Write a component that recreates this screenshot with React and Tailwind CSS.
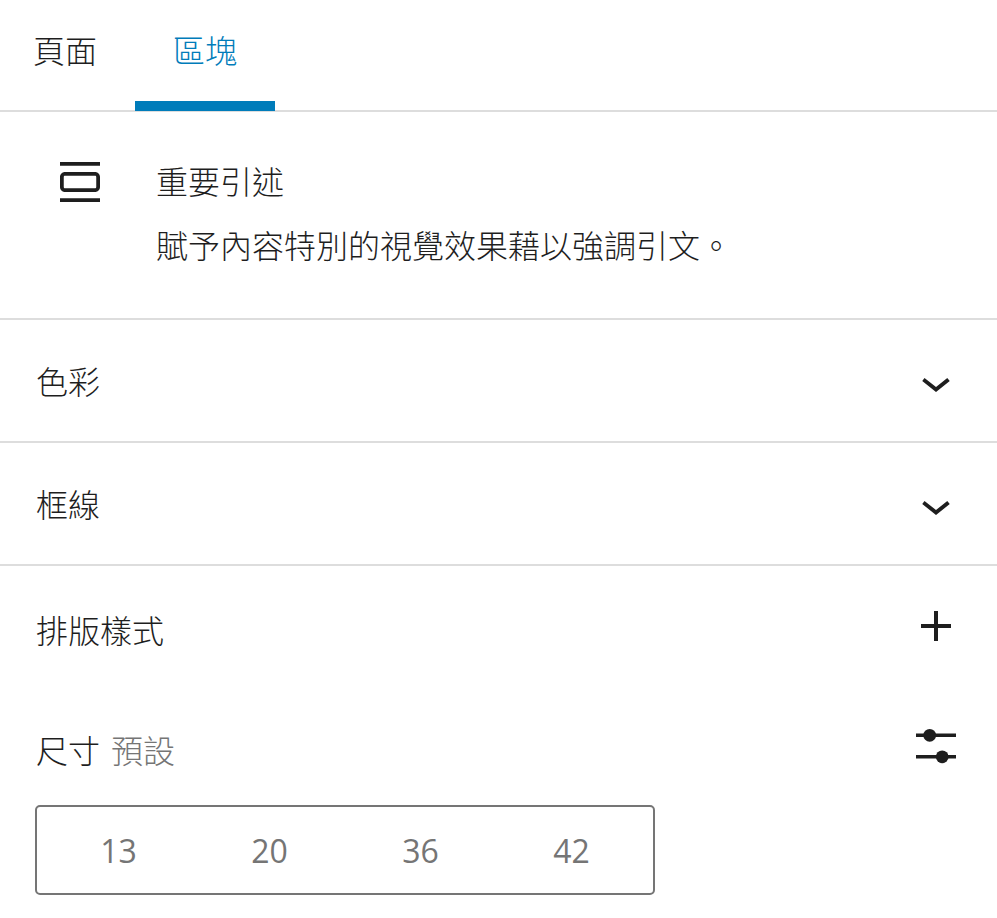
import React, { useState } from 'react';

const tabs = [
  { id: 'page', label: '頁面' },
  { id: 'block', label: '區塊' },
];

const panels = ['色彩', '框線'];

const fontSizes = [13, 20, 36, 42];

const PullquoteIcon = () => (
  <svg viewBox="0 0 24 24" className="size-[60px] shrink-0" fill="currentColor" aria-hidden="true">
    <path d="M18 8H6c-1.1 0-2 .9-2 2v4c0 1.1.9 2 2 2h12c1.1 0 2-.9 2-2v-4c0-1.1-.9-2-2-2zm.5 6c0 .3-.2.5-.5.5H6c-.3 0-.5-.2-.5-.5v-4c0-.3.2-.5.5-.5h12c.3 0 .5.2.5.5v4zM4 4v1.5h16V4H4zm0 16h16v-1.5H4V20z" />
  </svg>
);

const ChevronIcon = () => (
  <svg viewBox="0 0 24 24" className="size-[60px] shrink-0" fill="currentColor" aria-hidden="true">
    <path d="M17.5 11.6L12 16l-5.5-4.4.9-1.2L12 14l4.5-3.6 1 1.2z" />
  </svg>
);

const PlusIcon = () => (
  <svg viewBox="0 0 24 24" className="size-[60px]" fill="currentColor" aria-hidden="true">
    <path d="M18 11.2h-5.2V6h-1.6v5.2H6v1.6h5.2V18h1.6v-5.2H18z" />
  </svg>
);

const SlidersIcon = () => (
  <svg viewBox="0 0 60 60" className="size-[60px]" fill="currentColor" aria-hidden="true">
    <path d="M10 17.4h40V21H10zM10 39h40v3.6H10z" />
    <circle cx="23.7" cy="19.3" r="6.4" />
    <circle cx="36.2" cy="40.8" r="6.4" />
  </svg>
);

const App = () => {
  const [activeTab, setActiveTab] = useState('block');
  const [openPanel, setOpenPanel] = useState(null);

  return (
    <div className="min-h-screen overflow-hidden bg-white font-['Open_Sans','Noto_Sans_CJK_TC',sans-serif] text-[32px] leading-[48px] font-light text-[#1e1e1e]">
      {/* Sidebar tabs */}
      <nav className="-ml-[5px] flex border-b-2 border-[#ddd]">
        {tabs.map((tab) => (
          <button
            key={tab.id}
            type="button"
            onClick={() => setActiveTab(tab.id)}
            className={`-mb-px border-b-10 px-[38px] pt-[27px] pb-[26px] ${
              activeTab === tab.id ? 'border-[#007cba] text-[#007cba]' : 'border-transparent'
            }`}
          >
            {tab.label}
          </button>
        ))}
      </nav>

      {/* Block card */}
      <section className="flex gap-[46px] border-b-2 border-[#ddd] px-[50px] pt-10 pb-[38px]">
        <PullquoteIcon />
        <div className="flex flex-col gap-4 pt-1.5 pb-2.5">
          <h2>重要引述</h2>
          <p>賦予內容特別的視覺效果藉以強調引文。</p>
        </div>
      </section>

      {panels.map((panel) => (
        <h2 key={panel} className="border-b-2 border-[#ddd]">
          <button
            type="button"
            aria-expanded={openPanel === panel}
            onClick={() => setOpenPanel(openPanel === panel ? null : panel)}
            className="flex w-full items-center justify-between pt-8 pr-[31px] pb-[29px] pl-9 text-left"
          >
            {panel}
            <ChevronIcon />
          </button>
        </h2>
      ))}

      {/* Typography */}
      <section className="pt-[30px] pr-[31px] pb-[23px] pl-9">
        <div className="flex items-center justify-between">
          <h2 className="pt-2.5">排版樣式</h2>
          <button type="button" aria-label="排版樣式選項">
            <PlusIcon />
          </button>
        </div>

        <div className="mt-[60px] flex items-center justify-between">
          <h3 className="flex gap-[11px] pt-2.5">
            尺寸
            <span className="text-[#757575]">預設</span>
          </h3>
          <button type="button" aria-label="設定自訂尺寸">
            <SlidersIcon />
          </button>
        </div>

        <div className="-ml-px mt-[29px] grid w-[620px] max-w-full grid-cols-4 rounded-[5px] border-2 border-[#757575] px-1.5 pt-5 pb-[18px]">
          {fontSizes.map((size) => (
            <button key={size} type="button" className="font-normal text-[#757575]">
              {size}
            </button>
          ))}
        </div>
      </section>
    </div>
  );
};

export default App;
